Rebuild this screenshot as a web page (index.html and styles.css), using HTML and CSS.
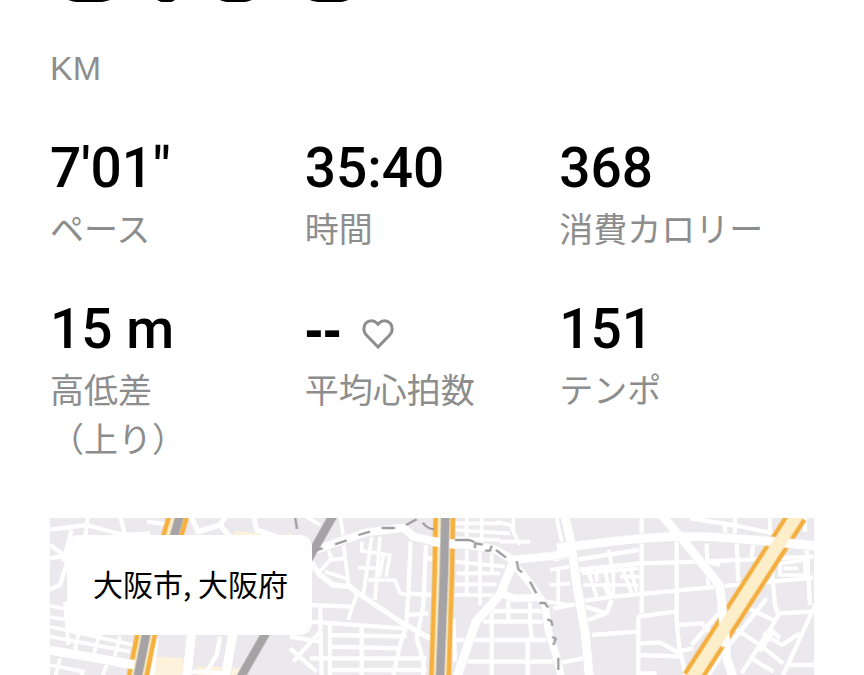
FILE: index.html
```html
<!DOCTYPE html>
<html lang="ja">

<head>
    <meta charset="UTF-8">
    <meta name="viewport" content="width=device-width, initial-scale=1.0">
    <title>ランの詳細</title>
    <link rel="stylesheet" href="styles.css">
</head>

<body>
    <main class="run">
        <header>
            <div class="distance"><span>5.08</span></div>
            <div class="unit">KM</div>
        </header>

        <dl class="stats">
            <div class="stat">
                <dd>7'01"</dd>
                <dt>ペース</dt>
            </div>
            <div class="stat">
                <dd>35:40</dd>
                <dt>時間</dt>
            </div>
            <div class="stat">
                <dd>368</dd>
                <dt>消費カロリー</dt>
            </div>
            <div class="stat">
                <dd>15 m</dd>
                <dt>高低差<br>（上り）</dt>
            </div>
            <div class="stat">
                <dd class="heart-rate">
                    <span>--</span>
                    <svg class="heart" viewBox="0 0 32 32" aria-hidden="true">
                        <path d="M16 29 L4.5 17.300 C1 13.500 1 8.500 3.800 5.300 C7 2 12 2 14.800 5 L16 6.300 L17.200 5 C20 2 25 2 28.200 5.300 C31 8.500 31 13.500 27.500 17.300 Z" />
                    </svg>
                </dd>
                <dt>平均心拍数</dt>
            </div>
            <div class="stat">
                <dd>151</dd>
                <dt>テンポ</dt>
            </div>
        </dl>

        <section class="map">
            <svg class="map-tiles" viewBox="0 0 2292 471" preserveAspectRatio="xMinYMin slice" aria-hidden="true">
                <defs>
                    <g id="main-roads">
                        <g transform="translate(-30 -39)">
                            <path class="w28" d="M20 434 L290 480" />
                            <path class="w28" d="M455 380 L440 520 M580 380 L555 520" />
                        </g>
                        <g transform="translate(750 -39)">
                            <path class="w26" d="M30 140 L110 112 L200 82 L310 68 L340 95 L420 113 L520 122 L585 133 L640 165 L760 152 L830 140" />
                            <path class="w28" d="M638 175 L600 268 L528 350 L500 430 L470 520" />
                            <path class="w24" d="M640 175 L690 235 L735 300 L745 380 L765 440 L785 520" />
                            <path class="w24" d="M600 262 L640 280 L720 278" />
                        </g>
                        <g transform="translate(1530 -39)">
                            <path class="w28" d="M14 30 L32 110 L52 250 L75 380 L88 520" />
                            <path class="w28" d="M-10 128 L50 122 L200 104 L340 94 L450 95 L600 106 L780 124" />
                            <path class="w28" d="M305 30 L360 95 L430 180 L478 240 L490 330 L500 460 L520 520" />
                        </g>
                    </g>
                </defs>

                <rect class="ground" width="2292" height="471" />

                <!-- built-up areas -->
                <g class="area" transform="translate(-30 -39)">
                    <path d="M590 78 L660 85 L655 130 L570 100 Z M740 80 L780 100 V240 L830 190 Z" />
                    <path d="M350 455 L430 460 V520 H330 Z M470 485 L545 485 V520 H470 Z M560 490 L600 490 L590 520 H560 Z" />
                </g>

                <!-- side streets -->
                <g class="streets" transform="translate(-30 -39)">
                    <path class="w14" d="M20 75 L140 60 L250 90 M145 30 L135 95 M240 30 L255 90 L330 85 M320 50 L385 58 M30 120 L85 160 L60 240 L25 255 M30 160 L90 150 M95 75 L70 170" />
                    <path class="w12" d="M20 300 L90 315 M20 335 L90 345 M30 365 L280 420 M30 395 L270 440 M75 290 L85 420 M120 370 L98 460 M180 385 L160 450 M240 395 L220 470 M30 480 L130 500 L120 520 M60 460 L45 520 M200 480 L185 520" />
                    <path class="w16" d="M450 30 L475 80 L540 60 L560 30 M640 30 L650 75 L710 95 M540 60 L570 95" />
                    <path class="w14" d="M455 500 L560 505 M350 400 L335 520 M540 395 L530 450 L500 500" />
                </g>
                <g class="streets" transform="translate(750 -39)">
                    <path class="w16" d="M30 165 L60 210 L100 240 L150 245 L180 268 L300 350 L390 400" />
                    <path class="w12" d="M10 30 L60 60 M120 30 L130 95 M50 210 L95 160 L80 125 M85 165 L130 160 M75 200 L145 222 M130 115 L145 235 L170 270 L155 310 L145 345" />
                    <path class="w12" d="M215 95 L190 270 M240 95 L225 285 M185 110 V138 L270 150 L258 215 M175 188 L250 190 M205 225 L285 225 L300 265 L335 270 M250 150 L238 215" />
                    <path class="w14" d="M332 110 L325 270 L318 365 L300 420 L280 510 M378 120 L370 300 L350 400 L370 470 V520 M370 155 L405 165 M320 265 L400 270 M325 330 L385 325" />
                    <path class="w14" d="M30 300 L155 305 M60 300 L65 520 M90 355 V520 M30 350 L310 370 M95 390 L320 395 M95 425 L300 430 M30 460 L380 460 M95 495 L380 495 M185 355 V520 M-30 395 L60 410 M-20 470 L60 380 M-30 430 L50 500" />
                    <path class="w12" d="M465 75 L630 85 M465 100 L600 105 M500 35 V120 M545 35 V120 M590 50 L630 60 L660 120 M640 35 V80 M600 110 L690 110 M465 55 H600" />
                    <path class="w12" d="M465 170 L615 185 M470 205 H600 M465 238 H590 M465 270 H590 M500 130 V275 M540 135 V300 M575 145 V205" />
                    <path class="w14" d="M460 340 L465 470 M450 405 L740 405 M550 350 L740 350 M495 470 L760 470 M575 310 V520 M625 285 V350 M690 285 V350 L695 395 L683 410 V520 M580 318 H735" />
                    <path class="w12" d="M750 195 L810 185 M750 240 L810 235 M740 290 L810 300 M775 190 V300 M770 40 L785 110" />
                </g>
                <g class="streets" transform="translate(1530 -39)">
                    <path class="w14" d="M245 30 V325 M350 100 V350 L358 430 L380 520 M45 165 L235 135 M50 195 L240 175 L420 170 L760 155 M50 290 L160 275 L420 250 L760 218 M-20 310 L60 295 M-20 165 L40 150" />
                    <path class="w12" d="M65 205 L235 190 M70 240 L235 240 M85 200 L110 275 M110 195 V230 M135 190 L150 270 M160 190 V270 M185 185 L215 265 M210 180 L230 260 M130 235 L145 270 M145 135 L155 180 M180 215 L240 215" />
                    <path class="w14" d="M75 305 L140 325 L155 285 M70 350 L140 325 M95 390 L230 380 M235 335 L345 320 M235 335 V520 M235 415 L300 412 L350 440 L400 430 M240 450 L370 455 M-10 475 L70 460 M235 505 H290" />
                    <path class="w14" d="M395 420 L480 320 M355 360 L425 355 L450 380 M440 115 L445 240 M530 110 L535 230 M580 115 L575 155 M480 180 L440 170" />
                    <path class="w14" d="M390 40 L520 60 L640 85 M495 55 V95 M525 35 V100 M630 35 V90 M735 35 V80 M740 130 L750 300" />
                    <path class="w14" d="M635 190 L645 300 L655 330 L635 365 L545 505 M655 325 L760 320 M770 290 L665 520 M500 430 L620 280 M565 310 L640 345 M525 370 L600 420 L670 475 M575 460 L640 500 M610 385 L665 420 L720 385 M630 370 L660 400 M690 480 H770" />
                    <path class="w12" d="M660 175 V210 H735 V165 Z M670 190 H715 M440 520 L500 430 M640 380 L600 440" />
                </g>

                <use class="road-edge" href="#main-roads" />
                <use class="road" href="#main-roads" />

                <!-- toll road -->
                <g transform="translate(1530 -39)">
                    <path class="toll-edge" d="M712 30 L396 520" />
                    <path class="road-gap" d="M600 106 L780 124 M486 305 L490 345 L498 425" />
                    <path class="toll" d="M712 30 L396 520" />
                </g>

                <!-- expressways -->
                <g transform="translate(-30 -39)">
                    <path class="express-edge" d="M415 30 L395 100 M320 380 L292 520" />
                    <path class="express-fill" d="M415 30 L395 100 M320 380 L292 520" />
                    <path class="express-line" d="M420 30 L400 100 M320 380 L292 520" />
                    <path class="express-line" d="M880 30 L815 145 L680 380 L600 520" />
                    <path class="road-gap" d="M225 470 L282 479" />
                </g>
                <g transform="translate(750 -39)">
                    <path class="express-edge" d="M433 30 L430 200 L420 520" />
                    <path class="express-fill" d="M433 30 L430 200 L420 520" />
                    <path class="road-gap" d="M395 109 L470 118" />
                    <path class="express-line" d="M436 30 L432 200 L420 520" />
                </g>

                <!-- railway -->
                <g class="railway" transform="translate(750 -39)">
                    <path d="M-15 35 L-9 72 M48 135 L68 130 M105 118 L140 106 M175 90 L210 80 M245 69 H285 M318 60 L350 43 M368 53 Q382 72 402 73" />
                    <path d="M465 105 H507 L523 111 M525 130 V115 L548 119 M555 137 H570 L575 122 M588 135 L618 158 M650 168 L655 193 L666 202 M690 230 L709 265 M718 294 H735 L744 308 M742 343 L754 348 L757 362 M757 395 L767 402 L760 420 M775 458 V495" />
                </g>
            </svg>
            <div class="place">大阪市, 大阪府</div>
        </section>
    </main>
</body>

</html>
```

FILE: styles.css
```css
* {
    box-sizing: border-box;
}

body {
    margin: 0;
    background-color: #fff;
    color: #000;
    font-family: "Liberation Sans", "Noto Sans CJK JP", sans-serif;
}

.run {
    display: flex;
    flex-direction: column;
    min-height: 100vh;
    padding: 0 50px;
}

/* the distance is scrolled nearly off the top */
.distance {
    display: flex;
    align-items: flex-end;
    height: 2px;
    overflow: hidden;
    font-family: "Open Sans", sans-serif;
    font-size: 164px;
    font-weight: 600;
    line-height: 128px;
}

.unit {
    margin-top: 42px;
    color: #8d8d8d;
    font-size: 34px;
    line-height: 48px;
}

.stats {
    display: grid;
    grid-template-columns: repeat(3, 1fr);
    row-gap: 42px;
    margin: 41px 0 56px;
}

.stat {
    display: flex;
    flex-direction: column;
}

.stat dd {
    margin: 0;
    font-family: Roboto, sans-serif;
    font-size: 55px;
    font-weight: 500;
    line-height: 70px;
}

.stat dt {
    color: #8d8d8d;
    font-family: "Noto Sans CJK JP", sans-serif;
    font-size: 34px;
    line-height: 49px;
}

.stat .heart-rate {
    display: flex;
    align-items: center;
    gap: 21px;
    font-family: "Liberation Sans", sans-serif;
    font-weight: 700;
}

.heart {
    width: 32px;
    height: 32px;
    margin-top: 10px;
    fill: none;
    stroke: #8d8d8d;
    stroke-width: 3;
}

.map {
    position: relative;
    flex: 1;
    min-height: 156px;
    overflow: hidden;
}

.map-tiles {
    position: absolute;
    width: 100%;
    height: 100%;
}

.place {
    position: absolute;
    top: 17px;
    left: 17px;
    padding: 24px 24px 28px 26px;
    border-radius: 12px;
    background-color: #fff;
    font-family: "Noto Sans CJK JP", sans-serif;
    font-size: 30px;
    line-height: 48px;
}

/* map drawing */
.map-tiles path {
    fill: none;
}

.ground {
    fill: #ebe9ed;
}

.map-tiles .area path {
    fill: #fdf2dc;
}

.streets {
    stroke: #fff;
    stroke-linejoin: round;
}

.w12 {
    stroke-width: 11;
}

.w14 {
    stroke-width: 13;
}

.w16 {
    stroke-width: 16;
}

.w24 {
    stroke-width: 24;
}

.w26 {
    stroke-width: 26;
}

.w28 {
    stroke-width: 28;
}

.road {
    stroke: #fff;
    stroke-linejoin: round;
}

/* soft casing that shows along both sides of the white roads */
.road-edge {
    stroke: #d9dde2;
    stroke-linejoin: round;
    filter: drop-shadow(0 0 2px #d9dde2);
}

.road-gap {
    stroke: #fff;
    stroke-width: 28;
}

.toll-edge {
    stroke: #f3ae3d;
    stroke-width: 64;
}

.toll {
    stroke: #fdeeca;
    stroke-width: 38;
}

.express-edge {
    stroke: #f5b03e;
    stroke-width: 66;
}

.express-fill {
    stroke: #fdeeca;
    stroke-width: 38;
}

.express-line {
    stroke: #a5a3a6;
    stroke-width: 26;
}

.railway {
    stroke: #9d9da0;
    stroke-width: 7;
}
```
